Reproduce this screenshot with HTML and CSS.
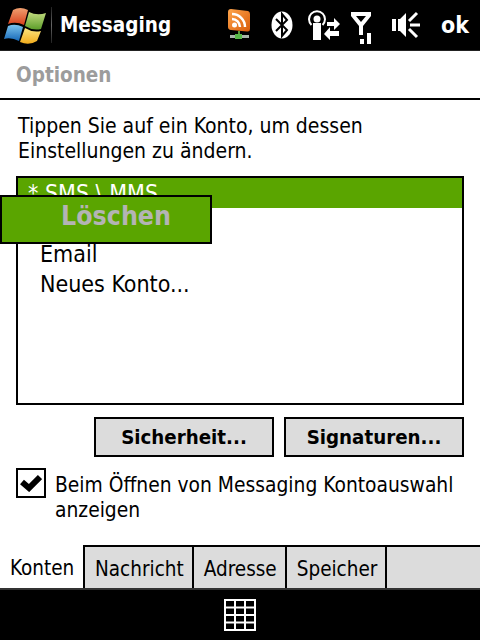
FILE: index.html
```html
<!DOCTYPE html>
<html lang="de">
<head>
    <meta charset="UTF-8">
    <title>Messaging - Optionen</title>
    <link rel="stylesheet" href="styles.css">
</head>
<body>
    <div class="screen">
        <div class="topbar">
            <svg class="start-logo" width="48" height="46" viewBox="2 2 48 46">
                <defs>
                    <linearGradient id="flagRed" x1="0" y1="0" x2="0" y2="1">
                        <stop offset="0" stop-color="#f0a070"/>
                        <stop offset="1" stop-color="#d8401c"/>
                    </linearGradient>
                    <linearGradient id="flagGreen" x1="0" y1="0" x2="0" y2="1">
                        <stop offset="0" stop-color="#c4dc80"/>
                        <stop offset="1" stop-color="#5c9e2a"/>
                    </linearGradient>
                    <linearGradient id="flagBlue" x1="0" y1="0" x2="0" y2="1">
                        <stop offset="0" stop-color="#7cc4ee"/>
                        <stop offset="1" stop-color="#1668b8"/>
                    </linearGradient>
                    <linearGradient id="flagYellow" x1="0" y1="0" x2="0" y2="1">
                        <stop offset="0" stop-color="#fde680"/>
                        <stop offset="1" stop-color="#f2ac1c"/>
                    </linearGradient>
                </defs>
                <path d="M13 10 Q20 6 28 10 L24 25 Q16 21 8 24 Z" fill="url(#flagRed)"/>
                <path d="M29 12 Q37 16 46 13 L41 29 Q33 31 25 26 Z" fill="url(#flagGreen)"/>
                <path d="M8 26 Q15 23 23 27 L19 41 Q11 37 4 39 Z" fill="url(#flagBlue)"/>
                <path d="M25 28 Q33 33 41 31 L37 41 Q29 46 20 42 Z" fill="url(#flagYellow)"/>
            </svg>
            <div class="top-divider"></div>
            <div class="app-title">Messaging</div>
            <div class="tray">
                <svg class="tray-rss" width="24" height="32" viewBox="0 0 24 32">
                    <defs>
                        <linearGradient id="rssFill" x1="0" y1="0" x2="1" y2="1">
                            <stop offset="0" stop-color="#ffa64d"/>
                            <stop offset="1" stop-color="#d85a08"/>
                        </linearGradient>
                    </defs>
                    <path d="M3 0 L20 2 Q22 2.500 22 5 V20 Q22 23 19 22.500 L3 21 Q0 20.500 0 18 V3 Q0 0 3 0 Z" fill="url(#rssFill)"/>
                    <circle cx="6.500" cy="16" r="2.500" fill="#fff"/>
                    <path d="M4 10 A8 8 0 0 1 12 18 M4 5 A13 13 0 0 1 17 18" fill="none" stroke="#fff" stroke-width="2.500"/>
                    <rect x="10" y="22" width="2" height="5" fill="#5a9a3a"/>
                    <rect x="2" y="26" width="19" height="3" fill="#a9b5a9"/>
                    <rect x="7" y="25" width="7" height="5" fill="#58b848"/>
                </svg>
                <svg class="tray-bt" width="22" height="28" viewBox="0 0 22 28">
                    <ellipse cx="11" cy="14" rx="10.500" ry="13.500" fill="#fff"/>
                    <path d="M5 8 L16 19 L11 25 V3 L16 9 L5 20" fill="none" stroke="#000" stroke-width="2"/>
                </svg>
                <svg class="tray-conn" width="32" height="30" viewBox="0 0 32 30">
                    <path d="M3.500 15 A8 8 0 1 1 14.500 15" fill="none" stroke="#fff" stroke-width="2"/>
                    <circle cx="9" cy="9" r="3.500" fill="#fff"/>
                    <rect x="5" y="13" width="8" height="17" fill="#fff"/>
                    <path d="M19 12 H26 V8 L32 14 L26 20 V16 H19 Z M31 21 H22 V17 L16 24 L22 30 V26 H31 Z" fill="#fff"/>
                </svg>
                <svg class="tray-signal" width="20" height="33" viewBox="0 0 20 33">
                    <path d="M0 1 H20 V5 L12 15 V24 H8 V15 L0 5 Z M5 5 L10 11 L15 5 Z" fill="#fff" fill-rule="evenodd"/>
                    <rect x="9" y="28" width="4" height="5" fill="#fff"/>
                    <rect x="16" y="22" width="4" height="11" fill="#fff"/>
                </svg>
                <svg class="tray-sound" width="28" height="30" viewBox="0 0 28 30">
                    <path d="M0 9 H4 V21 H0 Z M6 9 H8 L14 3 V27 L8 21 H6 Z" fill="#fff"/>
                    <path d="M17 11 L25 3 M18 15 H28 M17 19 L25 27" stroke="#fff" stroke-width="3"/>
                </svg>
                <span class="ok">ok</span>
            </div>
        </div>

        <div class="page-title">Optionen</div>

        <div class="content">
            <p class="hint">Tippen Sie auf ein Konto, um dessen Einstellungen zu ändern.</p>
            <div class="account-list">
                <div class="account selected">* SMS \ MMS</div>
                <div class="account"></div>
                <div class="account">Email</div>
                <div class="account">Neues Konto...</div>
            </div>
            <div class="buttons">
                <div class="btn">Sicherheit...</div>
                <div class="btn">Signaturen...</div>
            </div>
            <div class="check-row">
                <div class="checkbox">
                    <svg width="22" height="18" viewBox="0 0 22 18">
                        <path d="M2 8 L9 14 L20 3" fill="none" stroke="#000" stroke-width="6"/>
                    </svg>
                </div>
                <div class="check-label">Beim Öffnen von Messaging Kontoauswahl anzeigen</div>
            </div>
        </div>

        <div class="tabs">
            <div class="tab active">Konten</div>
            <div class="tab">Nachricht</div>
            <div class="tab">Adresse</div>
            <div class="tab">Speicher</div>
            <div class="tab-rest"></div>
        </div>

        <div class="bottombar">
            <svg width="32" height="32" viewBox="0 0 32 32">
                <path d="M1 1 H31 V31 H1 Z M1 8.500 H31 M1 16 H31 M1 23.500 H31 M11 1 V31 M21 1 V31" fill="none" stroke="#fff" stroke-width="2"/>
            </svg>
        </div>

        <div class="popup">Löschen</div>
    </div>
</body>
</html>
```

FILE: styles.css
```css
html, body {
    margin: 0;
    padding: 0;
}
body {
    font-family: "DejaVu Sans Condensed", "DejaVu Sans", sans-serif;
    font-size: 21px;
    color: #000;
    background-color: #fff;
}
.screen {
    position: relative;
    width: 480px;
    height: 640px;
    overflow: hidden;
    display: flex;
    flex-direction: column;
}
.topbar {
    height: 50px;
    background-color: #000;
    border-bottom: 1px solid #222;
    display: flex;
    align-items: center;
    color: #fff;
    flex-shrink: 0;
}
.start-logo {
    margin-left: 2px;
}
.top-divider {
    width: 1px;
    height: 36px;
    margin-left: 1px;
    background: linear-gradient(#222, #666, #222);
}
.app-title {
    margin-left: 8px;
    font-size: 20.5px;
    font-weight: bold;
}
.tray {
    margin-left: auto;
    display: flex;
    align-items: center;
    padding-right: 11px;
}
.tray-rss {
    margin-right: 19px;
}
.tray-bt {
    margin-right: 15px;
}
.tray-conn {
    margin-right: 11px;
}
.tray-signal {
    margin-top: 5px;
    margin-right: 21px;
}
.tray-sound {
    margin-right: 21px;
}
.ok {
    font-size: 23px;
    font-weight: bold;
}
.page-title {
    height: 47px;
    line-height: 48px;
    padding-left: 16px;
    font-weight: bold;
    font-size: 20.5px;
    color: #9c9c9c;
    border-bottom: 2px solid #000;
    flex-shrink: 0;
}
.content {
    flex: 1;
    padding: 14px 16px 0;
}
.hint {
    margin: 0 0 12px 2px;
    line-height: 25px;
}
.account-list {
    height: 225px;
    border: 2px solid #000;
    font-size: 23px;
}
.account {
    height: 30px;
    line-height: 32px;
    padding-left: 22px;
}
.account.selected {
    padding-left: 10px;
    line-height: 31px;
    background-color: #5aa500;
    color: #fff;
}
.buttons {
    display: flex;
    justify-content: flex-end;
    gap: 10px;
    margin-top: 12px;
}
.btn {
    box-sizing: border-box;
    width: 180px;
    height: 40px;
    line-height: 36px;
    text-align: center;
    font-size: 20.3px;
    font-weight: bold;
    background-color: #dcdcdc;
    border: 2px solid #000;
}
.check-row {
    display: flex;
    gap: 9px;
    margin-top: 11px;
}
.checkbox {
    box-sizing: border-box;
    flex-shrink: 0;
    width: 30px;
    height: 30px;
    border: 2px solid #000;
    display: flex;
    align-items: center;
    justify-content: center;
}
.check-label {
    font-size: 20.8px;
    line-height: 25px;
    padding-top: 5px;
}
.tabs {
    height: 43px;
    display: flex;
    flex-shrink: 0;
    font-size: 20.5px;
}
.tab {
    box-sizing: border-box;
    height: 43px;
    line-height: 44px;
    padding: 0 8px 0 10px;
    background-color: #dcdcdc;
    border-top: 2px solid #000;
    border-right: 2px solid #000;
}
.tab.active {
    width: 85px;
    background-color: #fff;
    border-top: none;
    line-height: 46px;
}
.tab-rest {
    flex: 1;
    background-color: #dcdcdc;
    border-top: 2px solid #000;
}
.bottombar {
    background-color: #000;
    border-top: 2px solid #333;
    box-sizing: border-box;
    height: 52px;
    display: flex;
    justify-content: center;
    align-items: center;
    flex-shrink: 0;
}
.popup {
    position: absolute;
    left: 0;
    top: 195px;
    box-sizing: border-box;
    width: 212px;
    height: 49px;
    line-height: 38px;
    padding-left: 20px;
    text-align: center;
    font-size: 26.5px;
    font-weight: bold;
    color: #b4b4b4;
    background-color: #5aa500;
    border: 2px solid #000;
}
```
